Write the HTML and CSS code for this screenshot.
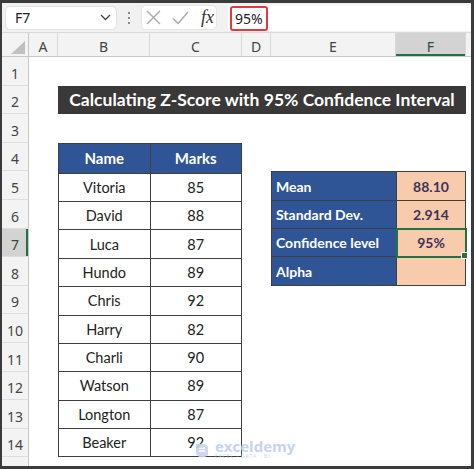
FILE: index.html
```html
<!DOCTYPE html>
<html>
<head>
  <meta charset="utf-8">
  <title>Calculating Z-Score with 95% Confidence Interval</title>
  <link rel="stylesheet" href="styles.css">
</head>
<body>
  <div class="window">
    <div class="formula-bar">
      <div class="name-box">
        <span>F7</span>
        <svg width="11" height="7" viewBox="0 0 11 7"><path d="M1 1l4.5 4.5L10 1" fill="none" stroke="#444" stroke-width="1.3"/></svg>
      </div>
      <div class="grip"><i></i><i></i><i></i></div>
      <div class="fx-box">
        <svg width="15" height="15" viewBox="0 0 15 15"><path d="M1 1l13 13M14 1L1 14" stroke="#a6a6a6" stroke-width="1.3"/></svg>
        <svg width="17" height="14" viewBox="0 0 17 14"><path d="M1 7.5l5 5L16 1" fill="none" stroke="#a6a6a6" stroke-width="1.3"/></svg>
        <span class="fx">fx</span>
      </div>
      <div class="formula-input">
        <span class="formula-value">95%</span>
      </div>
    </div>

    <div class="sheet">
      <div class="corner"><i class="corner-mark"></i></div>

      <div class="col-heads">
        <div class="col-head">A</div>
        <div class="col-head">B</div>
        <div class="col-head">C</div>
        <div class="col-head">D</div>
        <div class="col-head">E</div>
        <div class="col-head selected">F</div>
        <div class="col-head rest"></div>
      </div>

      <div class="row-heads">
        <div class="row-head">1</div>
        <div class="row-head">2</div>
        <div class="row-head">3</div>
        <div class="row-head">4</div>
        <div class="row-head">5</div>
        <div class="row-head">6</div>
        <div class="row-head selected">7</div>
        <div class="row-head">8</div>
        <div class="row-head">9</div>
        <div class="row-head">10</div>
        <div class="row-head">11</div>
        <div class="row-head">12</div>
        <div class="row-head">13</div>
        <div class="row-head">14</div>
        <div class="row-head rest"></div>
      </div>

      <div class="cells">
        <div class="title">Calculating Z-Score with 95% Confidence Interval</div>

        <table class="names">
          <tr><th>Name</th><th>Marks</th></tr>
          <tr><td>Vitoria</td><td>85</td></tr>
          <tr><td>David</td><td>88</td></tr>
          <tr><td>Luca</td><td>87</td></tr>
          <tr><td>Hundo</td><td>89</td></tr>
          <tr><td>Chris</td><td>92</td></tr>
          <tr><td>Harry</td><td>82</td></tr>
          <tr><td>Charli</td><td>90</td></tr>
          <tr><td>Watson</td><td>89</td></tr>
          <tr><td>Longton</td><td>87</td></tr>
          <tr><td>Beaker</td><td>92</td></tr>
        </table>

        <table class="stats">
          <tr><td class="label">Mean</td><td class="value">88.10</td></tr>
          <tr><td class="label">Standard Dev.</td><td class="value">2.914</td></tr>
          <tr><td class="label">Confidence level</td><td class="value active">95%</td></tr>
          <tr><td class="label">Alpha</td><td class="value"></td></tr>
        </table>
      </div>

      <div class="watermark">
        <svg width="16" height="17" viewBox="0 0 16 17"><path d="M2 3h9l3 3v8l-3 2H5l-3-3z" fill="#c9d5ee"/><path d="M5 7h6M5 10h6" stroke="#fff" stroke-width="1.5"/></svg>
        <div class="wm-text">
          <span class="wm-name">exceldemy</span>
          <span class="wm-sub">EXCEL · DATA · BI</span>
        </div>
      </div>
    </div>
  </div>
</body>
</html>
```

FILE: styles.css
```css
* {
  box-sizing: border-box;
}

body {
  margin: 0;
  background-color: #3b3b3b;
  font-family: "Noto Sans", sans-serif;
}

.window {
  margin: 3px 3px 3px 2px;
  height: 463px;
  background: #fff;
  display: flex;
  flex-direction: column;
}

/* formula bar */

.formula-bar {
  height: 30px;
  flex: none;
  display: flex;
  align-items: center;
  padding-left: 3px;
  background: #f1f1f1;
  border-bottom: 1px solid #dadada;
}

.name-box {
  width: 112px;
  height: 24px;
  display: flex;
  align-items: center;
  justify-content: space-between;
  padding: 0 5px 0 9px;
  background: #fff;
  border: 1px solid #e2e2e2;
  border-radius: 5px;
  font-size: 14px;
  color: #222;
}

.grip {
  width: 24px;
  display: flex;
  flex-direction: column;
  align-items: center;
  gap: 3px;
}

.grip i {
  width: 2px;
  height: 2px;
  background: #8a8a8a;
}

.fx-box {
  width: 76px;
  height: 25px;
  display: flex;
  align-items: center;
  gap: 11px;
  padding-left: 4px;
  background: #fff;
  border: 1px solid #e6e6e6;
  border-radius: 5px;
}

.fx {
  font-family: "Liberation Serif", serif;
  font-style: italic;
  font-size: 18px;
  color: #333;
  margin-left: 1px;
}

.formula-input {
  flex: 1;
  height: 26px;
  margin-left: 11px;
  display: flex;
  align-items: center;
  background: #fff;
}

.formula-value {
  height: 25px;
  margin: 2px 0 0 2px;
  padding: 0 3px;
  display: flex;
  align-items: center;
  border: 2px solid #e13a3e;
  border-radius: 3px;
  font-size: 14px;
  color: #222;
}

/* sheet */

.sheet {
  flex: 1;
  position: relative;
  display: grid;
  grid-template-columns: 27px 1fr;
  grid-template-rows: 24px 1fr;
}

.corner {
  display: flex;
  align-items: flex-end;
  justify-content: flex-end;
  padding: 0 3px 2px 0;
  background: #f3f3f3;
  border-right: 1px solid #c8c8c8;
  border-bottom: 1px solid #c8c8c8;
}

.corner-mark {
  width: 0;
  height: 0;
  border-left: 14px solid transparent;
  border-bottom: 13px solid #c0c0c0;
}

.col-heads {
  display: grid;
  grid-template-columns: 29px 92px 92px 29px 125px 70px 1fr;
  background: #f3f3f3;
  border-bottom: 1px solid #c8c8c8;
}

.col-head {
  display: flex;
  align-items: center;
  justify-content: center;
  padding-top: 4px;
  font-size: 14px;
  color: #444;
  border-right: 1px solid #d8d8d8;
}

.col-head.selected {
  background: #d3d3d3;
  color: #2d4a3a;
  box-shadow: inset 0 -2px 0 #217346;
}

.col-head.rest {
  border-right: none;
}

.row-heads {
  display: flex;
  flex-direction: column;
}

.row-head {
  height: 28.6px;
  flex: none;
  display: flex;
  align-items: flex-end;
  justify-content: center;
  padding-bottom: 2px;
  font-size: 14px;
  color: #444;
  background: #f3f3f3;
  border-right: 1px solid #c8c8c8;
  border-bottom: 1px solid #dedede;
}

.row-head.selected {
  background: #d3d3d3;
  color: #2d4a3a;
  box-shadow: inset -2px 0 0 #217346;
}

.row-head.rest {
  flex: 1;
  border-bottom: none;
}

.cells {
  display: grid;
  grid-template-columns: 29px 92px 92px 29px 125px 70px 1fr;
  grid-template-rows: repeat(14, 28.6px) 1fr;
  font-family: Lato, sans-serif;
}

.title {
  grid-column: 2 / 7;
  grid-row: 2;
  display: flex;
  align-items: center;
  justify-content: center;
  background: #3a3838;
  color: #fff;
  font-weight: bold;
  font-size: 17.5px;
}

table {
  width: 100%;
  height: 100%;
  border-collapse: collapse;
  table-layout: fixed;
}

th, td {
  border: 1px solid #3f3f3f;
  padding: 0;
  font-size: 14px;
}

.names {
  grid-column: 2 / 4;
  grid-row: 4 / 15;
}

.names th {
  background: #2f5597;
  color: #fff;
  font-weight: bold;
  font-size: 15px;
}

.names td {
  text-align: center;
  color: #222;
  font-size: 14.5px;
}

.stats {
  grid-column: 5 / 7;
  grid-row: 5 / 9;
}

.stats td.label {
  width: 125px;
  padding-left: 4px;
  background: #2f5597;
  color: #fff;
  font-weight: bold;
}

.stats td.value {
  text-align: center;
  background: #f8cbad;
  color: #3f3358;
  font-weight: bold;
}

.stats td.active {
  position: relative;
  outline: 2px solid #217346;
  outline-offset: -1px;
}

.stats td.active::after {
  content: "";
  position: absolute;
  right: -3px;
  bottom: -3px;
  width: 5px;
  height: 5px;
  background: #217346;
  border: 1px solid #fff;
}

.watermark {
  position: absolute;
  left: 192px;
  top: 406px;
  display: flex;
  align-items: center;
  gap: 5px;
  opacity: 0.9;
}

.wm-text {
  display: flex;
  flex-direction: column;
  line-height: 1;
}

.wm-name {
  font-family: "Open Sans", sans-serif;
  font-weight: bold;
  font-size: 15px;
  color: #c3d0ec;
}

.wm-sub {
  font-size: 5px;
  letter-spacing: 1px;
  color: #c8d2e6;
}
```
